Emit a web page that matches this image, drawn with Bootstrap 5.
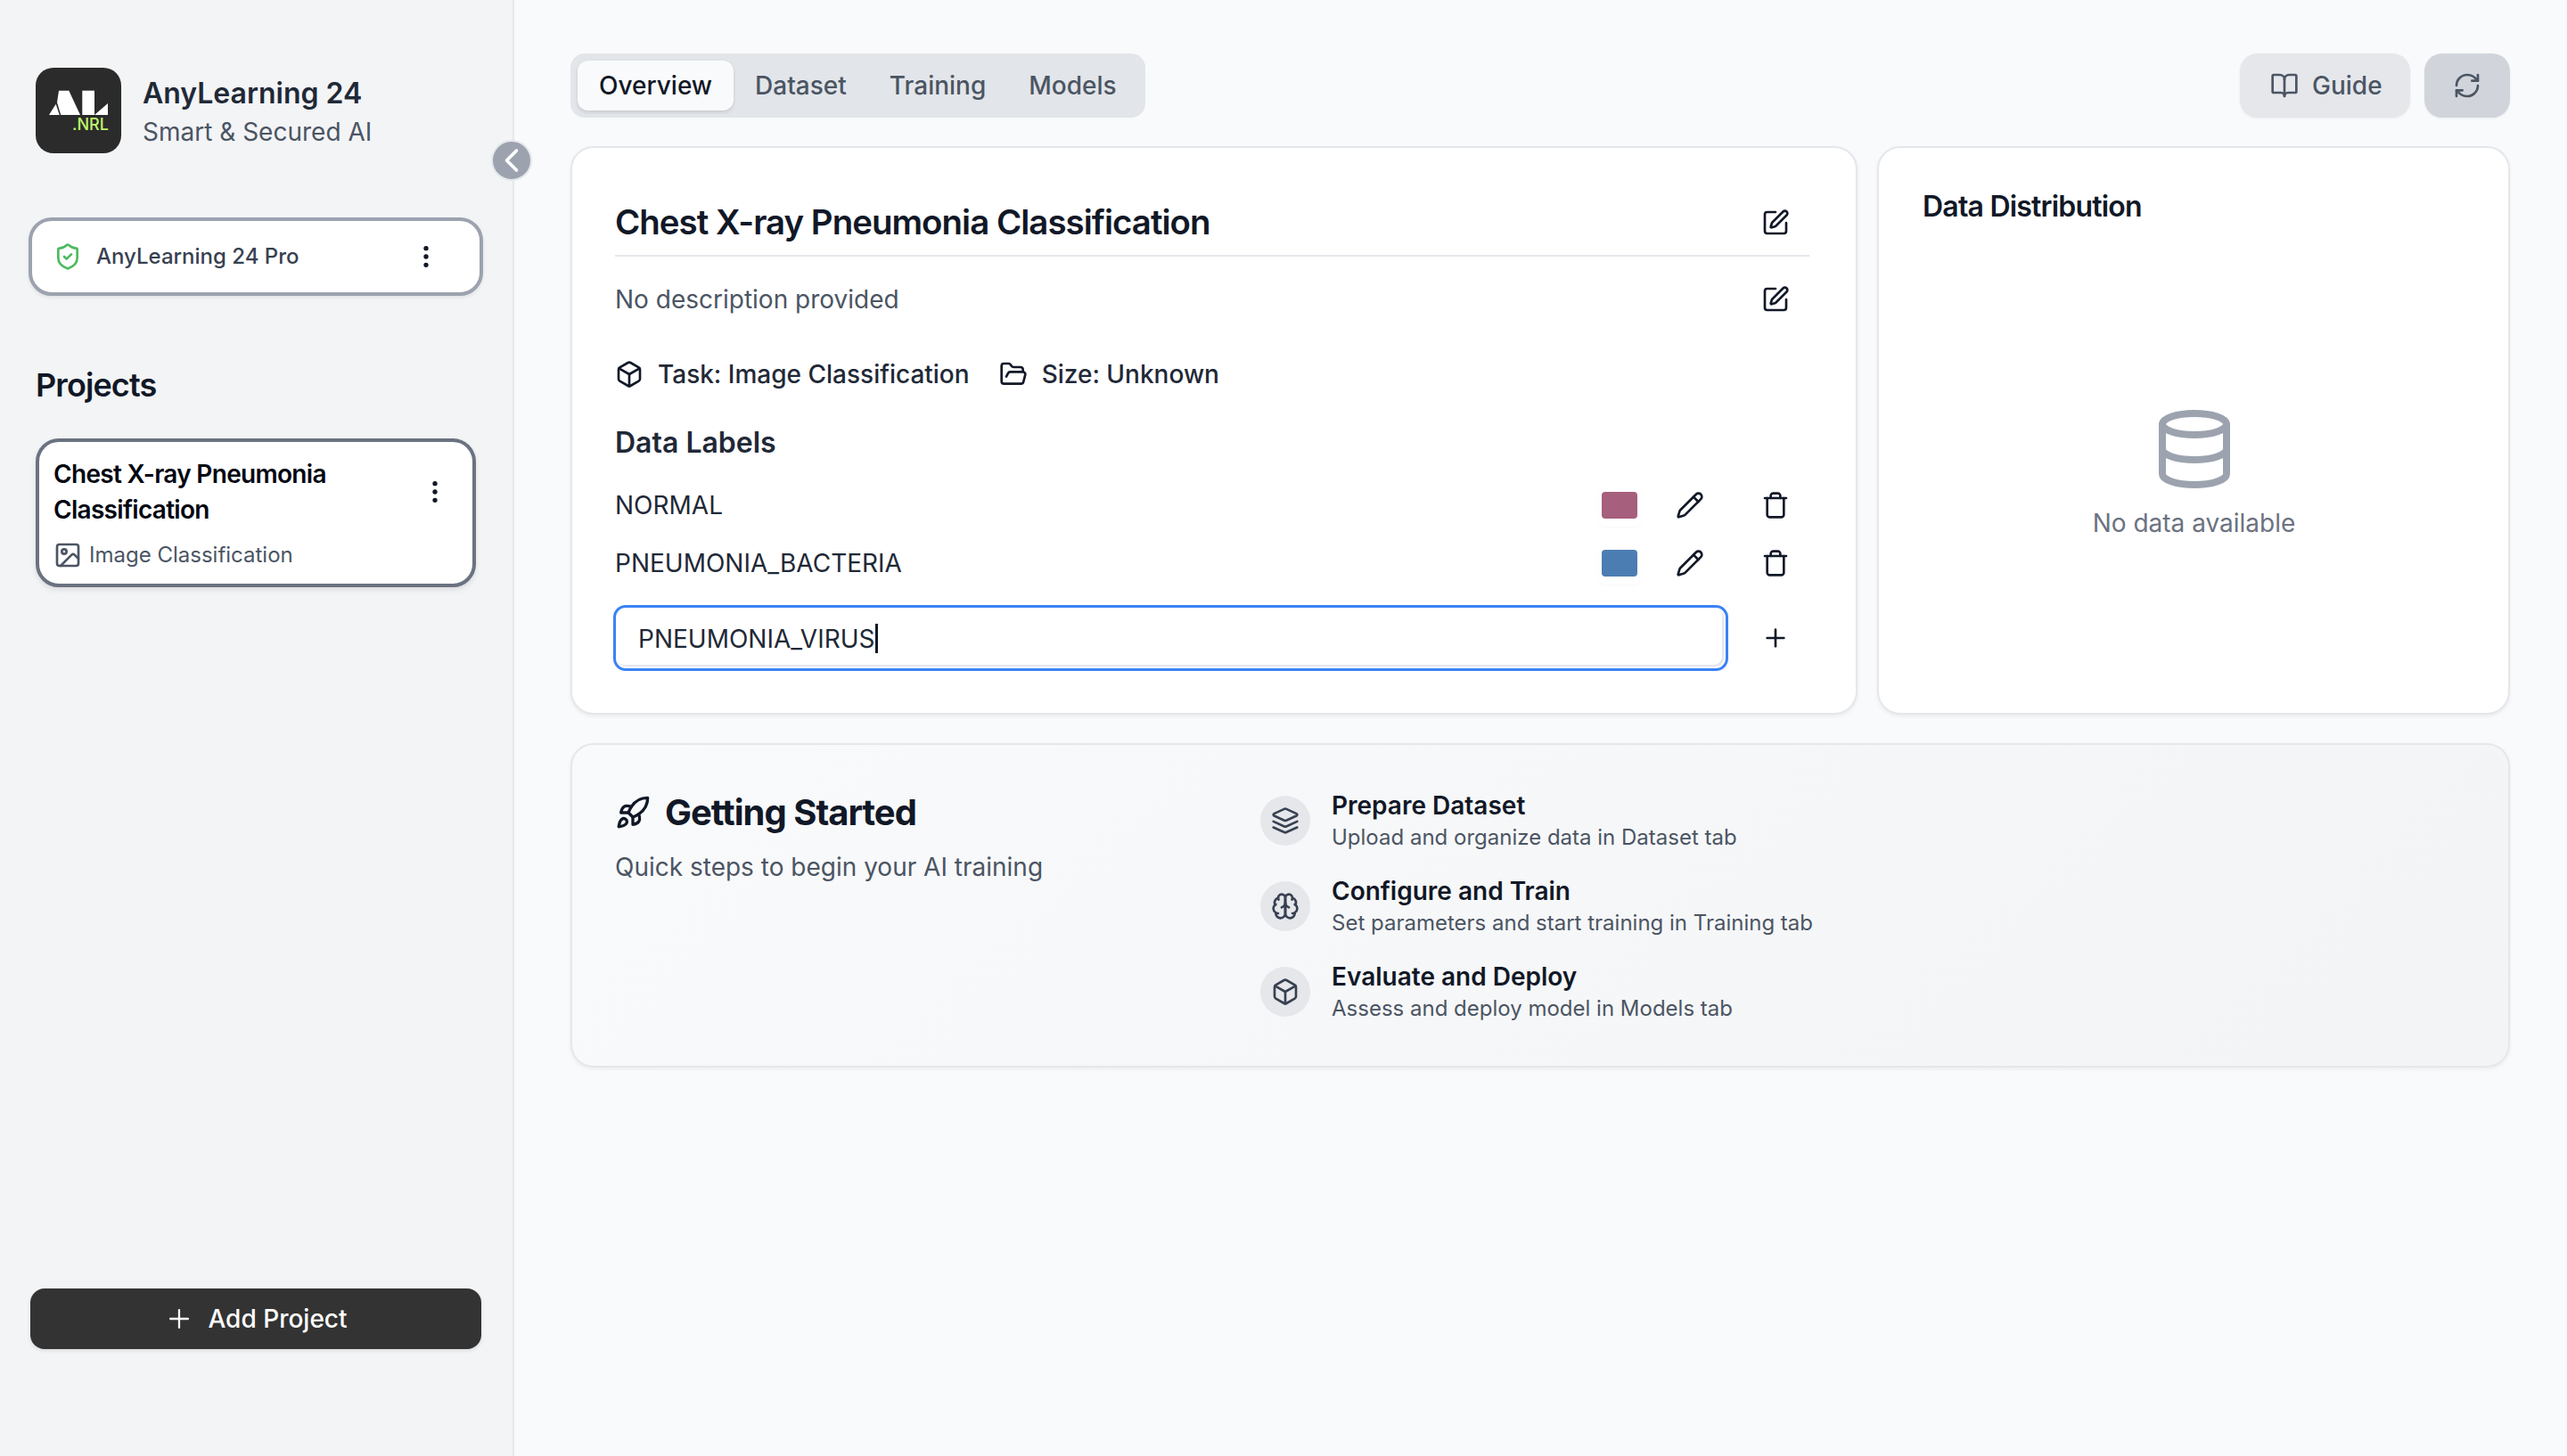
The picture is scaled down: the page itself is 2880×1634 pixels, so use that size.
<!doctype html>
<html lang="en"><head><meta charset="utf-8"><title>AnyLearning 24</title>
<link rel="stylesheet" href="https://cdn.jsdelivr.net/npm/bootstrap@5.3.0/dist/css/bootstrap.min.css">
<style>
html{font-size:32px}
body{font-family:Inter,"Noto Sans",sans-serif;font-size:28px;background:#f9fafb;color:#111827;height:1634px;overflow:hidden}
svg.ic{fill:none;stroke:currentColor;stroke-width:2;stroke-linecap:round;stroke-linejoin:round;flex:none;display:block}
.app-shell{height:1634px}
.side-panel{width:577px;flex:none;background:#f3f4f6;border-right:2px solid #e5e7eb;padding:76px 35px 120px 32px;position:relative}
.brand-row{margin-left:8px;gap:24px;height:96px}
.brand-logo{width:96px;height:96px;border-radius:20px;background:#2b2b2b;position:relative;flex:none}
.brand-logo svg{position:absolute;left:0;top:0}
.brand-nrl{position:absolute;left:41px;top:53px;font-size:18px;line-height:22px;font-weight:500;color:#c0f56b}
.brand-name{font-size:32px;line-height:48px;font-weight:600;color:#1f2937}
.brand-sub{font-size:28px;line-height:38px;color:#4b5563}
.collapse-dot{position:absolute;left:551px;top:157px;width:46px;height:46px;border-radius:50%;background:#9ca3af;border:2px solid #e5e7eb;color:#fff;display:flex;align-items:center;justify-content:center;padding:0}
.plan-box{margin-top:72px;height:88px;width:510px;background:#fff;border:4px solid #9ca3af;border-radius:26px;padding:0 44px 0 24px;gap:16px;box-shadow:0 2px 4px rgba(0,0,0,.08);color:#374151;font-size:24px;font-weight:500}
.shield-ic{color:#4cbb5f}
.dots-ic{color:#111827}
.side-title{margin:73px 0 33px 8px;font-size:36px;line-height:54px;font-weight:600;letter-spacing:-.025em;color:#111827}
.proj-box{margin-left:8px;width:494px;height:167px;background:#fff;border:4px solid #6b7280;border-radius:26px;padding:16px 26px 0 16px;box-shadow:0 3px 6px rgba(0,0,0,.1)}
.proj-name{font-size:28px;line-height:40px;font-weight:600;color:#030712;letter-spacing:-.025em;width:370px}
.proj-kind{margin-top:14px;gap:8px;font-size:24px;line-height:34px;color:#4b5563}
.add-btn{margin-top:auto;margin-left:2px;width:506px;height:68px;background:#333;border:0;border-radius:16px;color:#fff;font-size:28px;font-weight:500;gap:15px;box-shadow:0 2px 4px rgba(0,0,0,.1)}
.add-btn:hover{background:#333;color:#fff}
.main-panel{padding:60px 64px 0 63px;flex:1;min-width:0}
.tab-strip{height:72px;width:645px;background:#e2e5e9;border-radius:16px;padding:8px;flex-wrap:nowrap}
.tab-item{height:56px;padding:0 24px;border-radius:12px;color:#4b5563;font-size:28px;font-weight:500;line-height:56px;text-decoration:none}
.tab-item.active-tab{background:#f9fafb;color:#111827;box-shadow:0 2px 4px rgba(0,0,0,.12)}
.tool-btn{height:72px;border:0;border-radius:20px;color:#4b5563;font-size:28px;font-weight:500;gap:15px;box-shadow:0 1px 3px rgba(0,0,0,.06);padding:0 34px}
.tool-guide{background:#e5e7eb;width:191px}
.tool-guide:hover{background:#e5e7eb;color:#4b5563}
.tool-refresh{background:#d1d5db;width:96px;justify-content:center}
.tool-refresh:hover{background:#d1d5db;color:#4b5563}
.panel-card{border:2px solid #e5e7eb;border-radius:26px;background:#fff;box-shadow:0 2px 4px rgba(0,0,0,.06);height:638px}
.cards-row{margin-top:32px;gap:22px}
.main-card{width:1444px;flex:none;padding:53px 52px 0 48px}
.dist-card{flex:1;padding:41px 48px 8px 49px}
.title-row{height:60px;padding-right:14px}
.title-row .icon-cell{margin-top:2px}
.card-heading{font-size:38.4px;font-weight:600;letter-spacing:-.025em;line-height:60px;color:#111827;margin:0}
.rule-line{border-top:2px solid #e5e7eb;margin-top:7px}
.desc-row{height:60px;margin-top:18px;padding-right:14px;color:#4b5563;font-size:28px}
.icon-cell{width:48px;height:48px;display:flex;align-items:center;justify-content:center;color:#111827;background:transparent;border:0;padding:0;flex:none}
.meta-row{height:40px;margin-top:34px;font-size:28px;font-weight:500;color:#1f2937}
.meta-row svg{color:#111827}
.meta-text{margin-left:16px}
.meta-next{margin-left:33px}
.sub-heading{font-size:32px;line-height:44px;font-weight:600;color:#1f2937;margin:35px 0 0}
.label-row{height:48px;padding-right:14px;font-size:28px;color:#1f2937}
.label-row.first-row{margin-top:24px}
.label-row.next-row{margin-top:17px}
.swatch-cell{width:48px;height:48px;border:0;padding:8px 4px;background:#fff;border-radius:8px;margin-right:31px;box-shadow:0 1px 3px rgba(0,0,0,.03)}
.swatch-fill{display:block;width:40px;height:30px;border-radius:4px}
.pencil-cell{margin-right:48px}
.input-row{margin-top:23px;margin-left:-2px;padding-right:14px;gap:29px}
.input-wrap{position:relative;flex-grow:1}
.label-input.form-control{height:74px;border:3px solid #3b82f6;border-radius:14px;font-size:28px;padding:1px 25px 0;color:#1f2937;box-shadow:inset 0 0 0 2px #fff,inset -2px -2px 0 2px #e5e7eb;background:#fff}
.fake-caret{position:absolute;left:294px;top:21px;width:3px;height:33px;background:#111827}
.dist-title{font-size:32px;line-height:50px;font-weight:600;letter-spacing:-.025em;color:#111827;margin:0}
.empty-state{color:#9ca3af;margin-top:15px}
.empty-text{color:#6b7280;font-size:28px;margin-top:14px}
.start-card{margin-top:32px;height:364px;border:2px solid #e5e7eb;border-radius:26px;background:linear-gradient(135deg,#f9fafb,#f3f4f6);padding:49px 48px 45px;box-shadow:0 2px 4px rgba(0,0,0,.06)}
.start-left{width:724px;flex:none}
.start-title{font-size:40px;line-height:54px;font-weight:700;letter-spacing:-.025em;color:#111827;gap:16px;margin:0}
.start-sub{margin-top:12px;font-size:28px;line-height:44px;color:#4b5563}
.step-item{gap:24px;margin-bottom:24px}
.step-item:last-child{margin-bottom:0}
.step-dot{width:56px;height:56px;border-radius:50%;background:#e5e7eb;color:#374151;display:flex;align-items:center;justify-content:center;flex:none}
.step-title{font-size:28px;line-height:38px;font-weight:600;color:#111827}
.step-sub{font-size:24px;line-height:34px;color:#4b5563}
</style></head>
<body>
<svg width="0" height="0" class="position-absolute"><defs>
<symbol id="i-edit" viewBox="0 0 24 24"><path d="M12 3H5a2 2 0 0 0-2 2v14a2 2 0 0 0 2 2h14a2 2 0 0 0 2-2v-7"/><path d="M18.375 2.625a1 1 0 0 1 3 3l-9.013 9.014a2 2 0 0 1-.853.505l-2.873.84a.5.5 0 0 1-.62-.62l.84-2.873a2 2 0 0 1 .506-.852z"/></symbol>
<symbol id="i-pencil" viewBox="0 0 24 24"><path d="M21.174 6.812a1 1 0 0 0-3.986-3.987L3.842 16.174a2 2 0 0 0-.5.83l-1.321 4.352a.5.5 0 0 0 .623.622l4.353-1.32a2 2 0 0 0 .83-.497z"/><path d="m15 5 4 4"/></symbol>
<symbol id="i-trash" viewBox="0 0 24 24"><path d="M3 6h18"/><path d="M19 6v14c0 1-1 2-2 2H7c-1 0-2-1-2-2V6"/><path d="M8 6V4c0-1 1-2 2-2h4c1 0 2 1 2 2v2"/></symbol>
<symbol id="i-plus" viewBox="0 0 24 24"><path d="M5 12h14"/><path d="M12 5v14"/></symbol>
<symbol id="i-box" viewBox="0 0 24 24"><path d="M21 8a2 2 0 0 0-1-1.730l-7-4a2 2 0 0 0-2 0l-7 4A2 2 0 0 0 3 8v8a2 2 0 0 0 1 1.730l7 4a2 2 0 0 0 2 0l7-4A2 2 0 0 0 21 16Z"/><path d="m3.3 7 8.7 5 8.7-5"/><path d="M12 22V12"/></symbol>
<symbol id="i-folder" viewBox="0 0 24 24"><path d="m6 14 1.5-2.9A2 2 0 0 1 9.24 10H20a2 2 0 0 1 1.94 2.5l-1.54 6a2 2 0 0 1-1.95 1.5H4a2 2 0 0 1-2-2V5a2 2 0 0 1 2-2h3.9a2 2 0 0 1 1.69.9l.81 1.2a2 2 0 0 0 1.67.9H18a2 2 0 0 1 2 2v2"/></symbol>
<symbol id="i-db" viewBox="0 0 24 24"><ellipse cx="12" cy="5" rx="9" ry="3"/><path d="M3 5V19A9 3 0 0 0 21 19V5"/><path d="M3 12A9 3 0 0 0 21 12"/></symbol>
<symbol id="i-book" viewBox="0 0 24 24"><path d="M12 7v14"/><path d="M3 18a1 1 0 0 1-1-1V4a1 1 0 0 1 1-1h5a4 4 0 0 1 4 4 4 4 0 0 1 4-4h5a1 1 0 0 1 1 1v13a1 1 0 0 1-1 1h-6a3 3 0 0 0-3 3 3 3 0 0 0-3-3z"/></symbol>
<symbol id="i-refresh" viewBox="0 0 24 24"><path d="M3 12a9 9 0 0 1 9-9 9.75 9.75 0 0 1 6.74 2.74L21 8"/><path d="M21 3v5h-5"/><path d="M21 12a9 9 0 0 1-9 9 9.75 9.75 0 0 1-6.74-2.74L3 16"/><path d="M8 16H3v5"/></symbol>
<symbol id="i-rocket" viewBox="0 0 24 24"><path d="M4.5 16.5c-1.5 1.26-2 5-2 5s3.74-.5 5-2c.71-.84.7-2.13-.09-2.91a2.18 2.18 0 0 0-2.91-.09z"/><path d="m12 15-3-3a22 22 0 0 1 2-3.95A12.88 12.88 0 0 1 22 2c0 2.72-.78 7.5-6 11a22.35 22.35 0 0 1-4 2z"/><path d="M9 12H4s.55-3.03 2-4c1.62-1.08 5 0 5 0"/><path d="M12 15v5s3.03-.55 4-2c1.08-1.62 0-5 0-5"/></symbol>
<symbol id="i-layers" viewBox="0 0 24 24"><path d="m12.83 2.18a2 2 0 0 0-1.66 0L2.6 6.08a1 1 0 0 0 0 1.83l8.58 3.91a2 2 0 0 0 1.66 0l8.58-3.9a1 1 0 0 0 0-1.83Z"/><path d="m22 17.65-9.17 4.16a2 2 0 0 1-1.66 0L2 17.65"/><path d="m22 12.65-9.17 4.16a2 2 0 0 1-1.66 0L2 12.65"/></symbol>
<symbol id="i-brain" viewBox="0 0 24 24"><path d="M12 5a3 3 0 1 0-5.997.125 4 4 0 0 0-2.526 5.77 4 4 0 0 0 .556 6.588A4 4 0 1 0 12 18Z"/><path d="M12 5a3 3 0 1 1 5.997.125 4 4 0 0 1 2.526 5.77 4 4 0 0 1-.556 6.588A4 4 0 1 1 12 18Z"/><path d="M15 13a4.5 4.5 0 0 1-3-4 4.5 4.5 0 0 1-3 4"/><path d="M17.599 6.5a3 3 0 0 0 .399-1.375"/><path d="M6.003 5.125A3 3 0 0 0 6.401 6.5"/><path d="M3.477 10.896a4 4 0 0 1 .585-.396"/><path d="M19.938 10.5a4 4 0 0 1 .585.396"/><path d="M6 18a4 4 0 0 1-1.967-.516"/><path d="M19.967 17.484A4 4 0 0 1 18 18"/></symbol>
<symbol id="i-shield" viewBox="0 0 24 24"><path d="M20 13c0 5-3.5 7.5-7.66 8.95a1 1 0 0 1-.67-.01C7.5 20.5 4 18 4 13V6a1 1 0 0 1 1-1c2 0 4.5-1.2 6.24-2.72a1.17 1.17 0 0 1 1.52 0C14.51 3.81 17 5 19 5a1 1 0 0 1 1 1z"/><path d="m9 12 2 2 4-4"/></symbol>
<symbol id="i-image" viewBox="0 0 24 24"><rect width="18" height="18" x="3" y="3" rx="2" ry="2"/><circle cx="9" cy="9" r="2"/><path d="m21 15-3.086-3.086a2 2 0 0 0-2.828 0L6 21"/></symbol>
<symbol id="i-dots" viewBox="0 0 24 24"><circle cx="12" cy="12" r="1"/><circle cx="12" cy="5" r="1"/><circle cx="12" cy="19" r="1"/></symbol>
<symbol id="i-left" viewBox="0 0 24 24"><path d="m15 18-6-6 6-6"/></symbol>
</defs></svg>

<div class="app-shell d-flex">
  <aside class="side-panel d-flex flex-column">
    <div class="brand-row d-flex align-items-center">
      <div class="brand-logo">
        <svg width="96" height="96" viewBox="0 0 96 96" fill="#fff"><path d="M15 53 22.700 40.700 26.700 53Z"/><path d="M26 25.700H37.300L50 53H28.300L24 39Z"/><path d="M52.300 25.700H66V53H52.300Z"/><path d="M66 53 81 40V53Z"/></svg>
        <span class="brand-nrl">.NRL</span>
      </div>
      <div>
        <div class="brand-name">AnyLearning 24</div>
        <div class="brand-sub">Smart &amp; Secured AI</div>
      </div>
    </div>
    <button class="collapse-dot" type="button" aria-label="Collapse"><svg class="ic" width="44" height="44"><use href="#i-left"/></svg></button>
    <div class="plan-box d-flex align-items-center">
      <svg class="ic shield-ic" width="32" height="32"><use href="#i-shield"/></svg>
      <span class="flex-grow-1">AnyLearning 24 Pro</span>
      <svg class="ic dots-ic" width="32" height="32"><use href="#i-dots"/></svg>
    </div>
    <div class="side-title">Projects</div>
    <div class="proj-box">
      <div class="d-flex justify-content-between align-items-center">
        <div class="proj-name">Chest X-ray Pneumonia Classification</div>
        <svg class="ic dots-ic" width="32" height="32"><use href="#i-dots"/></svg>
      </div>
      <div class="proj-kind d-flex align-items-center"><svg class="ic" width="32" height="32"><use href="#i-image"/></svg><span>Image Classification</span></div>
    </div>
    <button class="btn add-btn d-flex align-items-center justify-content-center" type="button"><svg class="ic" width="34" height="34" style="stroke-width:1.6"><use href="#i-plus"/></svg>Add Project</button>
  </aside>

  <main class="main-panel">
    <div class="d-flex justify-content-between">
      <nav class="tab-strip d-flex">
        <a class="tab-item active-tab" href="#">Overview</a>
        <a class="tab-item" href="#">Dataset</a>
        <a class="tab-item" href="#">Training</a>
        <a class="tab-item" href="#">Models</a>
      </nav>
      <div class="d-flex gap-2">
        <button class="btn tool-btn tool-guide d-flex align-items-center" type="button"><svg class="ic" width="32" height="32"><use href="#i-book"/></svg>Guide</button>
        <button class="btn tool-btn tool-refresh d-flex align-items-center" type="button" aria-label="Refresh"><svg class="ic" width="32" height="32"><use href="#i-refresh"/></svg></button>
      </div>
    </div>

    <div class="cards-row d-flex">
      <section class="card panel-card main-card">
        <div class="title-row d-flex align-items-center justify-content-between">
          <h2 class="card-heading">Chest X-ray Pneumonia Classification</h2>
          <button class="icon-cell" type="button" aria-label="Edit"><svg class="ic" width="32" height="32"><use href="#i-edit"/></svg></button>
        </div>
        <div class="rule-line"></div>
        <div class="desc-row d-flex align-items-center justify-content-between">
          <span>No description provided</span>
          <button class="icon-cell" type="button" aria-label="Edit"><svg class="ic" width="32" height="32"><use href="#i-edit"/></svg></button>
        </div>
        <div class="meta-row d-flex align-items-center">
          <svg class="ic" width="32" height="32"><use href="#i-box"/></svg><span class="meta-text">Task: Image Classification</span>
          <svg class="ic meta-next" width="32" height="32"><use href="#i-folder"/></svg><span class="meta-text">Size: Unknown</span>
        </div>
        <h3 class="sub-heading">Data Labels</h3>
        <div class="label-row first-row d-flex align-items-center">
          <span class="flex-grow-1">NORMAL</span>
          <button class="swatch-cell" type="button" aria-label="Colour"><span class="swatch-fill" style="background:#a65f7c"></span></button>
          <button class="icon-cell pencil-cell" type="button" aria-label="Rename"><svg class="ic" width="32" height="32"><use href="#i-pencil"/></svg></button>
          <button class="icon-cell" type="button" aria-label="Delete"><svg class="ic" width="32" height="32"><use href="#i-trash"/></svg></button>
        </div>
        <div class="label-row next-row d-flex align-items-center">
          <span class="flex-grow-1">PNEUMONIA_BACTERIA</span>
          <button class="swatch-cell" type="button" aria-label="Colour"><span class="swatch-fill" style="background:#4c7db2"></span></button>
          <button class="icon-cell pencil-cell" type="button" aria-label="Rename"><svg class="ic" width="32" height="32"><use href="#i-pencil"/></svg></button>
          <button class="icon-cell" type="button" aria-label="Delete"><svg class="ic" width="32" height="32"><use href="#i-trash"/></svg></button>
        </div>
        <div class="input-row d-flex align-items-center">
          <div class="input-wrap">
            <input class="form-control label-input" value="PNEUMONIA_VIRUS" aria-label="New label">
            <span class="fake-caret"></span>
          </div>
          <button class="icon-cell" type="button" aria-label="Add"><svg class="ic" width="32" height="32"><use href="#i-plus"/></svg></button>
        </div>
      </section>
      <section class="card panel-card dist-card">
        <h3 class="dist-title">Data Distribution</h3>
        <div class="empty-state flex-grow-1 d-flex flex-column align-items-center justify-content-center">
          <svg class="ic" width="96" height="96"><use href="#i-db"/></svg>
          <div class="empty-text">No data available</div>
        </div>
      </section>
    </div>

    <section class="start-card d-flex">
      <div class="start-left">
        <h2 class="start-title d-flex align-items-center"><svg class="ic" width="40" height="40"><use href="#i-rocket"/></svg>Getting Started</h2>
        <div class="start-sub">Quick steps to begin your AI training</div>
      </div>
      <div>
        <div class="step-item d-flex align-items-center"><span class="step-dot"><svg class="ic" width="32" height="32"><use href="#i-layers"/></svg></span><div><div class="step-title">Prepare Dataset</div><div class="step-sub">Upload and organize data in Dataset tab</div></div></div>
        <div class="step-item d-flex align-items-center"><span class="step-dot"><svg class="ic" width="32" height="32"><use href="#i-brain"/></svg></span><div><div class="step-title">Configure and Train</div><div class="step-sub">Set parameters and start training in Training tab</div></div></div>
        <div class="step-item d-flex align-items-center"><span class="step-dot"><svg class="ic" width="32" height="32"><use href="#i-box"/></svg></span><div><div class="step-title">Evaluate and Deploy</div><div class="step-sub">Assess and deploy model in Models tab</div></div></div>
      </div>
    </section>
  </main>
</div>
<script src="https://cdn.jsdelivr.net/npm/bootstrap@5.3.0/dist/js/bootstrap.bundle.min.js"></script>
</body></html>
